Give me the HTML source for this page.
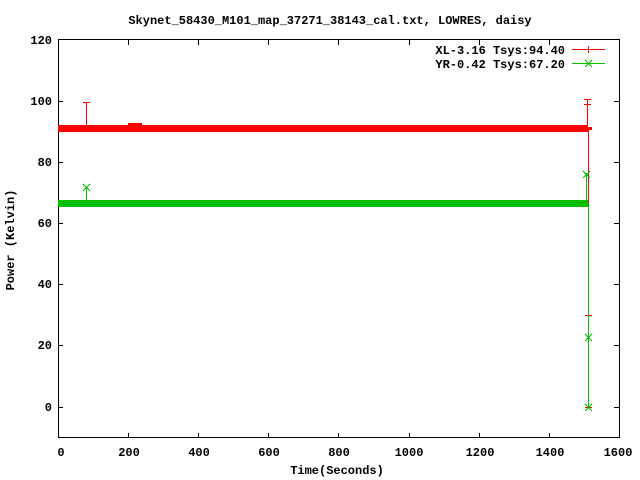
<!DOCTYPE html>
<html><head><style>html,body{margin:0;padding:0;background:#fff}svg{display:block}text{font-family:"Liberation Mono",monospace;font-weight:bold;font-size:12px;fill:#000}</style></head><body>
<svg width="640" height="480" viewBox="0 0 640 480" xmlns="http://www.w3.org/2000/svg">
<rect width="640" height="480" fill="#fff"/>
<text x="330" y="24" text-anchor="middle">Skynet_58430_M101_map_37271_38143_cal.txt, LOWRES, daisy</text>
<g stroke="#000" stroke-width="1" fill="none" shape-rendering="crispEdges">
<rect x="58.5" y="39.5" width="561" height="398"/>
<path d="M58 101.5h5M614 101.5h5M58 162.5h5M614 162.5h5M58 223.5h5M614 223.5h5M58 284.5h5M614 284.5h5M58 345.5h5M614 345.5h5M58 407.5h5M614 407.5h5"/>
<path d="M128.5 438v-5M128.5 40v5M198.5 438v-5M198.5 40v5M268.5 438v-5M268.5 40v5M338.5 438v-5M338.5 40v5M409.5 438v-5M409.5 40v5M479.5 438v-5M479.5 40v5M549.5 438v-5M549.5 40v5"/>
</g>
<g text-anchor="end">
<text x="52" y="44">120</text><text x="52" y="105">100</text><text x="52" y="166">80</text><text x="52" y="227">60</text><text x="52" y="288">40</text><text x="52" y="349">20</text><text x="52" y="411">0</text>
</g>
<g text-anchor="middle">
<text x="61" y="456">0</text><text x="129" y="456">200</text><text x="199" y="456">400</text><text x="269" y="456">600</text><text x="339" y="456">800</text><text x="409" y="456">1000</text><text x="480" y="456">1200</text><text x="550" y="456">1400</text><text x="618" y="456">1600</text>
<text x="337" y="474">Time(Seconds)</text>
</g>
<text transform="translate(14,240) rotate(-90)" text-anchor="middle">Power (Kelvin)</text>
<text x="565" y="54" text-anchor="end">XL-3.16 Tsys:94.40</text>
<text x="565" y="68" text-anchor="end">YR-0.42 Tsys:67.20</text>
<g shape-rendering="crispEdges">
<path d="M572 49.5h33M588.5 46v7" stroke="#f00"/>
<path d="M572 63.5h33M585 60l7 7M592 60l-7 7" stroke="#00c000"/>
<rect x="58" y="125" width="530" height="7" fill="#f00"/>
<rect x="128" y="123" width="14" height="4" fill="#f00"/>
<rect x="588" y="127" width="4" height="3" fill="#f00"/>
<path d="M86.5 128v-26M83 102.5h7M587.5 129v-30M584 99.5h7M584 104.5h7M588.5 130v278M585 315.5h7M585 407.5h7" stroke="#f00"/>
<rect x="58" y="200" width="530" height="7" fill="#00c000"/>
<path d="M86.5 202v-14M83 184l7 7M90 184l-7 7M586.5 203v-30M583 171l7 7M590 171l-7 7M588.5 203v205M585 334l7 7M592 334l-7 7M585 404l7 7M592 404l-7 7" stroke="#00c000" fill="none"/>
</g>
</svg>
</body></html>
